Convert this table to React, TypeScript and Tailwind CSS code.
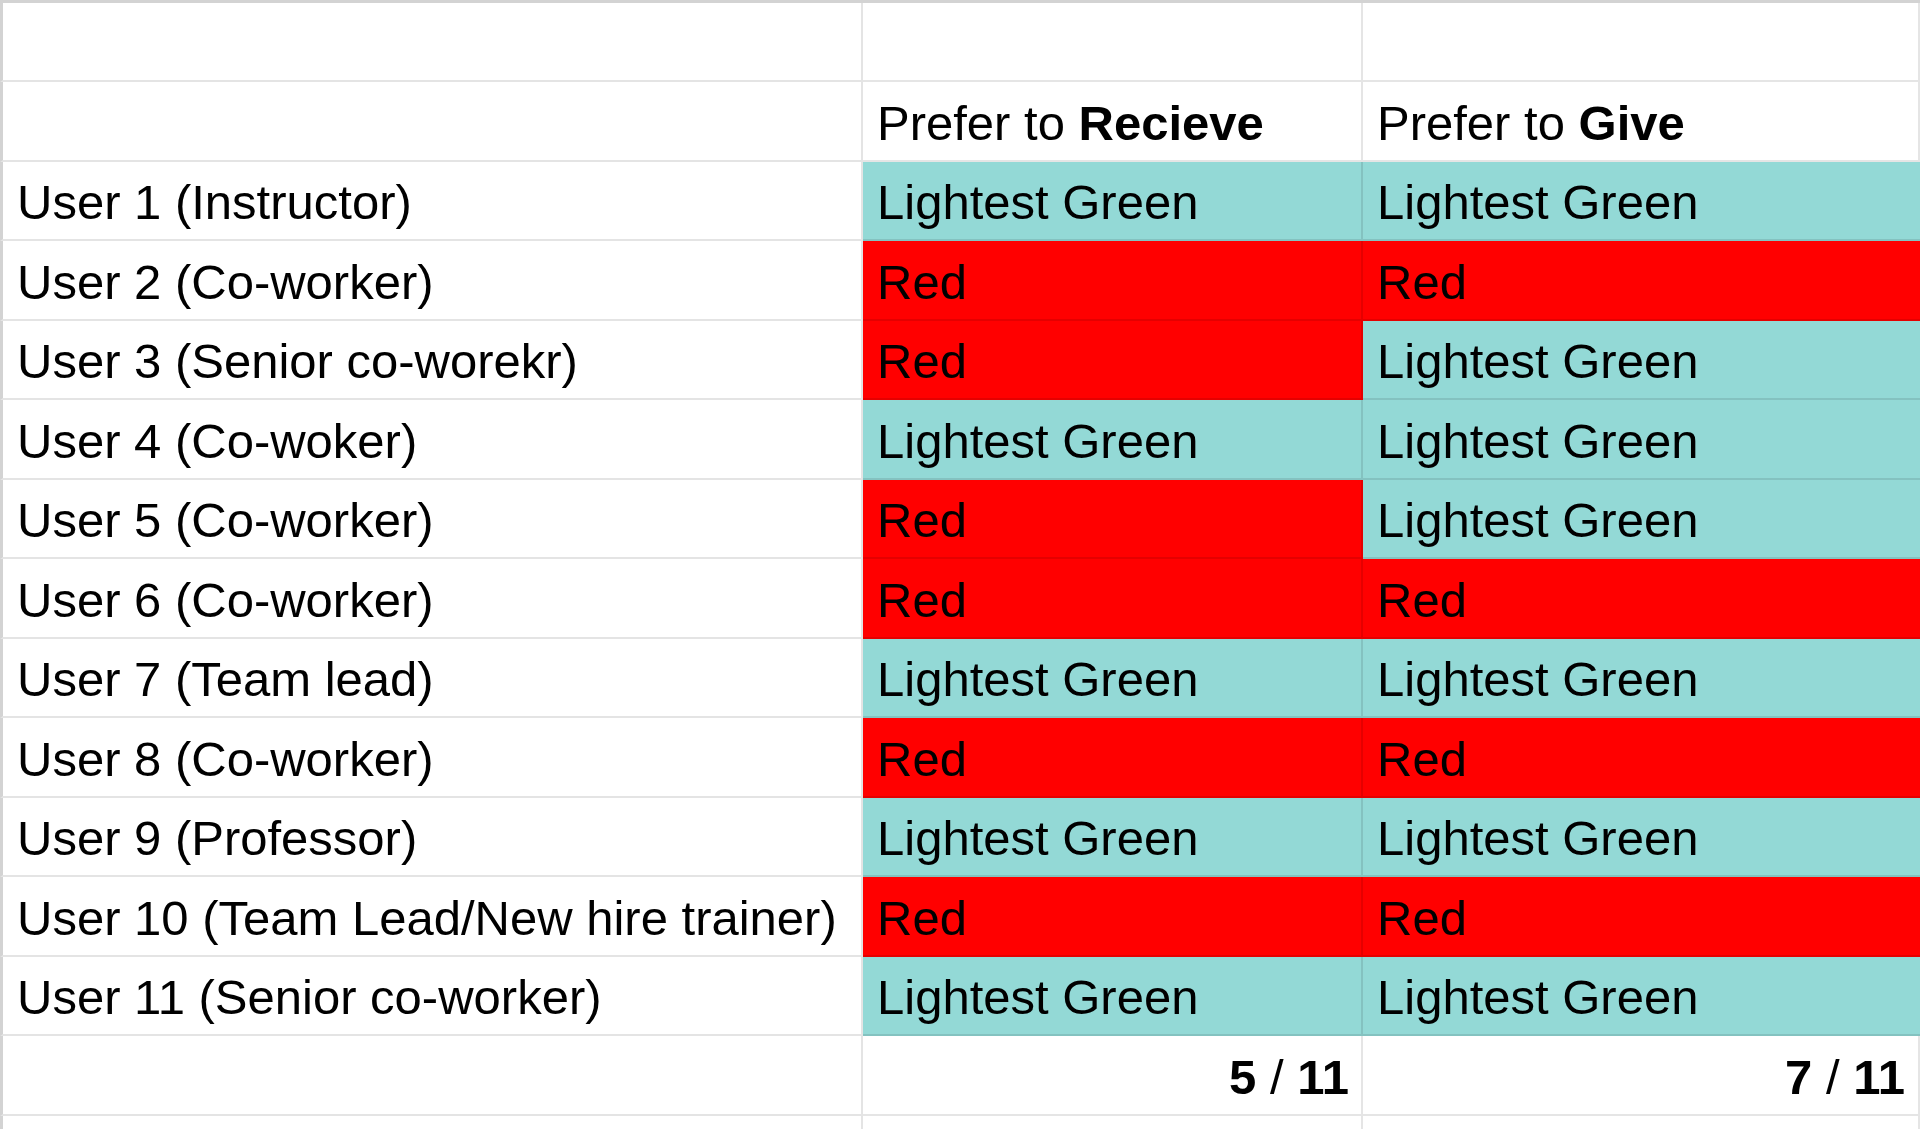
type Pref = "green" | "red";

type Row = {
  label: string;
  receive: Pref;
  give: Pref;
};

const rows: Row[] = [
  { label: "User 1 (Instructor)", receive: "green", give: "green" },
  { label: "User 2 (Co-worker)", receive: "red", give: "red" },
  { label: "User 3 (Senior co-worekr)", receive: "red", give: "green" },
  { label: "User 4 (Co-woker)", receive: "green", give: "green" },
  { label: "User 5 (Co-worker)", receive: "red", give: "green" },
  { label: "User 6 (Co-worker)", receive: "red", give: "red" },
  { label: "User 7 (Team lead)", receive: "green", give: "green" },
  { label: "User 8 (Co-worker)", receive: "red", give: "red" },
  { label: "User 9 (Professor)", receive: "green", give: "green" },
  { label: "User 10 (Team Lead/New hire trainer)", receive: "red", give: "red" },
  { label: "User 11 (Senior co-worker)", receive: "green", give: "green" },
];

// row heights alternate so the grid lines land on the sheet's pixel rhythm
const heights = ["h-[80px]", "h-[79px]"];

const cellBase =
  "flex items-center border-b-2 border-r-2 border-[rgba(0,0,0,0.1)] pt-[4px] text-[49px] leading-none text-black";

function PrefCell({ value }: { value: Pref }) {
  const bg = value === "green" ? "bg-[#93d9d6]" : "bg-[#ff0000]";
  return (
    <div className={`${cellBase} ${bg} pl-[14px]`}>
      {value === "green" ? "Lightest Green" : "Red"}
    </div>
  );
}

export default function App() {
  return (
    <div
      className="h-[1129px] w-[1920px] overflow-hidden bg-white"
      style={{ fontFamily: '"Liberation Sans", Arial, sans-serif' }}
    >
      <div className="border-t-[3px] border-[#d3d3d3]">
        <div className="grid grid-cols-[863px_500px_1fr]">
          {/* empty top row */}
          <div className={`${cellBase} h-[79px] border-l-[3px] border-l-[#d3d3d3]`} />
          <div className={`${cellBase} h-[79px]`} />
          <div className={`${cellBase} h-[79px] border-r-0`} />

          {/* header row */}
          <div className={`${cellBase} h-[80px] border-l-[3px] border-l-[#d3d3d3]`} />
          <div className={`${cellBase} h-[80px] pl-[14px]`}>
            <span>
              Prefer to <span className="font-bold">Recieve</span>
            </span>
          </div>
          <div className={`${cellBase} h-[80px] border-r-0 pl-[14px]`}>
            <span>
              Prefer to <span className="font-bold">Give</span>
            </span>
          </div>

          {rows.map((r, i) => (
            <div key={r.label} className="contents">
              <div
                className={`${cellBase} ${heights[(i + 1) % 2]} border-l-[3px] border-l-[#d3d3d3] bg-white pl-[14px]`}
              >
                {r.label}
              </div>
              <PrefCell value={r.receive} />
              <div className="contents [&>div]:border-r-0">
                <PrefCell value={r.give} />
              </div>
            </div>
          ))}

          {/* totals row */}
          <div className={`${cellBase} h-[80px] border-l-[3px] border-l-[#d3d3d3]`} />
          <div className={`${cellBase} h-[80px] justify-end pr-[12px]`}>
            <span>
              <span className="font-bold">5</span> / <span className="font-bold">11</span>
            </span>
          </div>
          <div className={`${cellBase} h-[80px] justify-end border-r-0 pr-[13px]`}>
            <span>
              <span className="font-bold">7</span> / <span className="font-bold">11</span>
            </span>
          </div>

          {/* partial row at the bottom edge */}
          <div className={`${cellBase} h-[40px] border-l-[3px] border-l-[#d3d3d3]`} />
          <div className={`${cellBase} h-[40px]`} />
          <div className={`${cellBase} h-[40px] border-r-0`} />
        </div>
      </div>
    </div>
  );
}
